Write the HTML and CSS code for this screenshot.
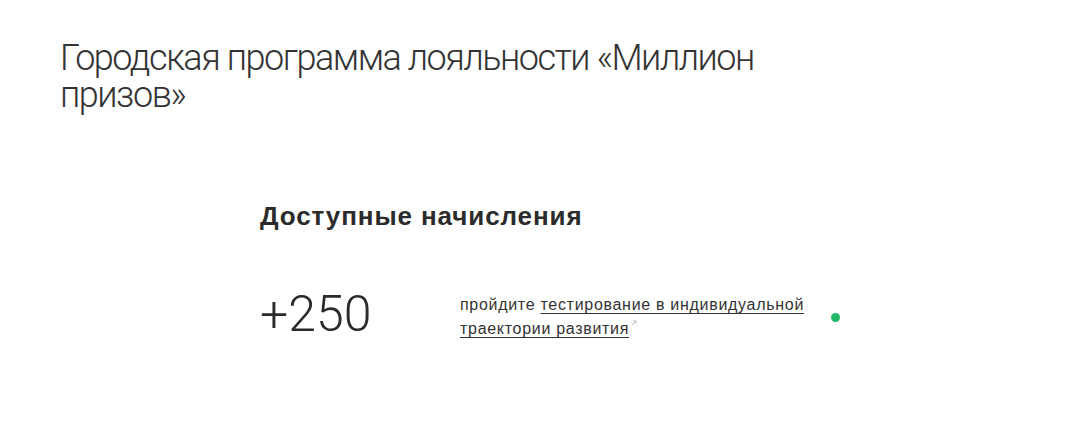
FILE: index.html
```html
<!DOCTYPE html>
<html lang="ru">
<head>
<meta charset="utf-8">
<link rel="stylesheet" href="styles.css">
</head>
<body>
<div class="page">
  <h1 class="title">Городская программа лояльности «Миллион призов»</h1>
  <section class="accruals">
    <h2 class="section-title">Доступные начисления</h2>
    <div class="row">
      <div class="points">+250</div>
      <div class="desc">пройдите <a class="link" href="#">тестирование в индивидуальной траектории развития</a><svg class="ext" width="6" height="6" viewBox="0 0 6 6"><path d="M1 5L5 1M2 1H5V4" fill="none" stroke="#b5b5b5" stroke-width="0.9"/></svg></div>
      <span class="dot"></span>
    </div>
    <h2 class="section-title next">Обмен баллов</h2>
  </section>
</div>
</body>
</html>
```
FILE: styles.css
```css
html, body {
  margin: 0;
  padding: 0;
  background: #fff;
  overflow: hidden;
}
body {
  font-family: "Liberation Sans", Arial, sans-serif;
  color: #2b2b2b;
}
.page {
  padding: 40px 0 0 60px;
}
.title {
  margin: 0;
  width: 720px;
  font-family: "Roboto", "Liberation Sans", sans-serif;
  font-size: 36px;
  line-height: 37px;
  font-weight: 300;
  letter-spacing: -1.45px;
  color: #333;
}
.accruals {
  margin: 87px 0 0 200px;
}
.section-title {
  margin: 0;
  font-size: 26px;
  line-height: 30px;
  font-weight: 700;
  letter-spacing: 0.9px;
  color: #2b2b2b;
}
.row {
  display: flex;
  align-items: flex-start;
  margin-top: 57px;
}
.points {
  width: 200px;
  flex: none;
  margin-top: -2px;
  font-family: "Roboto", "Liberation Sans", sans-serif;
  font-size: 50px;
  line-height: 56px;
  font-weight: 300;
  color: #2b2b2b;
}
.desc {
  width: 356px;
  flex: none;
  margin-top: 5px;
  font-size: 16px;
  line-height: 24px;
  letter-spacing: 0.7px;
  color: #333;
}
.link {
  color: #333;
  text-decoration: underline;
  text-decoration-thickness: 1px;
  text-underline-offset: 3px;
}
.ext {
  vertical-align: 8px;
  margin-left: 2px;
}
.dot {
  flex: none;
  width: 9px;
  height: 9px;
  margin-top: 25px;
  border-radius: 50%;
  background: #1fb866;
  margin-left: 15px;
}
.next {
  margin-top: 82px;
}
```
